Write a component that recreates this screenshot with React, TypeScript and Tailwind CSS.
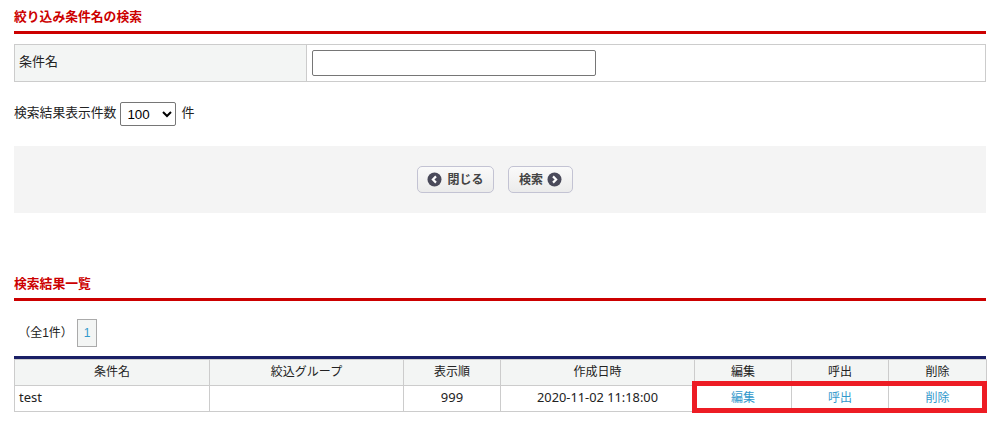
import React from 'react';

const font = { fontFamily: '"Liberation Sans", "Noto Sans CJK JP", sans-serif' };

const ArrowIcon = ({ dir }: { dir: 'left' | 'right' }) => (
  <svg className="w-[15px] h-[15px] shrink-0" viewBox="0 0 15 15">
    <circle cx="7.5" cy="7.5" r="7" fill="#4a4a5a" />
    <path
      d={dir === 'left' ? 'M9 4.4 L5.9 7.5 L9 10.6' : 'M6 4.4 L9.1 7.5 L6 10.6'}
      fill="none"
      stroke="#ffffff"
      strokeWidth="2.2"
    />
  </svg>
);

const SectionTitle = ({ children }: { children: React.ReactNode }) => (
  <h2 className="h-[27px] border-b-[3px] border-[#cc0000] text-[12.8px] leading-[20px] font-bold text-[#cc0000]">{children}</h2>
);

const headers = ['条件名', '絞込グループ', '表示順', '作成日時', '編集', '呼出', '削除'];

export default function App() {
  return (
    <div className="w-[1000px] h-[434px] bg-white px-[14px] pt-[7px] text-[13px] text-[#222222] overflow-hidden relative" style={font}>
      <SectionTitle>絞り込み条件名の検索</SectionTitle>

      <div className="flex h-[38px] mt-[10px] border border-[#cccccc]">
        <div className="w-[292px] px-[4px] pb-[2px] flex items-center bg-[#f3f5f4] border-r border-[#cccccc]">条件名</div>
        <div className="flex-1 flex items-center pl-[5px]">
          <input type="text" className="w-[284px] h-[26px] bg-white border border-[#767676] rounded-[2px]" />
        </div>
      </div>

      <div className="flex items-center h-[26px] mt-[19px]">
        <span className="text-[12.8px] pb-[2px]">検索結果表示件数</span>
        <select defaultValue="100" className="w-[56px] h-[24px] ml-[4px] mr-[5px] pl-[2px] bg-white border border-[#767676] rounded-[2px] text-[13.33px] text-black appearance-auto">
          <option value="100">100</option>
        </select>
        <span className="pb-[2px]">件</span>
      </div>

      <div className="flex justify-center items-center gap-[14px] h-[67px] mt-[19px] pr-[10px] bg-[#f4f4f4]">
        <button className="flex items-center gap-[5px] w-[77px] h-[27px] justify-center rounded-[5px] border border-[#c3c3d3] bg-gradient-to-b from-[#fafafa] to-[#ebebeb] text-[12px] font-bold text-[#444444]">
          <ArrowIcon dir="left" />
          閉じる
        </button>
        <button className="flex items-center gap-[4px] w-[65px] h-[27px] justify-center rounded-[5px] border border-[#c3c3d3] bg-gradient-to-b from-[#fafafa] to-[#ebebeb] text-[12px] font-bold text-[#444444]">
          検索
          <ArrowIcon dir="right" />
        </button>
      </div>

      <div className="mt-[61px]">
        <SectionTitle>検索結果一覧</SectionTitle>
      </div>

      <div className="flex items-center h-[28px] mt-[18px]">
        <span className="w-[63px] text-center text-[12px]">（全1件）</span>
        <span className="w-[20px] h-[28px] flex items-center justify-center bg-[#f3f5f4] border border-[#aaaaaa] text-[12px] text-[#3399cc]">1</span>
      </div>

      <div className="w-[972px] h-[3px] mt-[9px] bg-[#1a1f66]" />
      <table className="w-[972px] table-fixed border-collapse text-[12px]">
        <colgroup>
          <col className="w-[195px]" />
          <col className="w-[194px]" />
          <col className="w-[97px]" />
          <col className="w-[194px]" />
          <col className="w-[97px]" />
          <col className="w-[97px]" />
          <col className="w-[98px]" />
        </colgroup>
        <thead>
          <tr className="h-[26px]">
            {headers.map(h => (
              <th key={h} className="border border-[#cccccc] bg-[#f3f5f4] font-normal px-0 pt-0 pb-[2px]">{h}</th>
            ))}
          </tr>
        </thead>
        <tbody>
          <tr className="h-[26px]">
            <td className="border border-[#cccccc] px-[4px] pt-0 pb-[2px] text-[13px] font-['Noto_Sans']">test</td>
            <td className="border border-[#cccccc] p-0"></td>
            <td className="border border-[#cccccc] px-0 pt-0 pb-[2px] text-center text-[13px] font-['Noto_Sans']">999</td>
            <td className="border border-[#cccccc] px-0 pt-0 pb-[2px] text-center text-[12.8px] font-['Noto_Sans']">2020-11-02 11:18:00</td>
            <td className="border border-[#cccccc] px-0 pt-0 pb-[2px] text-center text-[#3399cc]">編集</td>
            <td className="border border-[#cccccc] px-0 pt-0 pb-[2px] text-center text-[#3399cc]">呼出</td>
            <td className="border border-[#cccccc] px-0 pt-0 pb-[2px] text-center text-[#3399cc]">削除</td>
          </tr>
        </tbody>
      </table>

      {/* annotation box over the action cells */}
      <div className="absolute left-[692px] top-[381px] w-[295px] h-[32px] border-[5px] border-[#ed1c24]" />
    </div>
  );
}
